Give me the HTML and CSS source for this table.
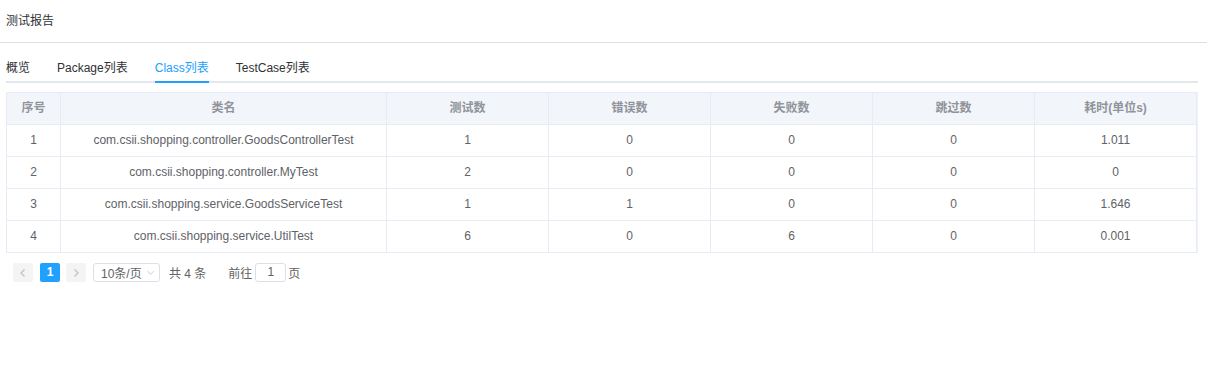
FILE: index.html
```html
<!DOCTYPE html>
<html lang="zh-CN">
<head>
<meta charset="utf-8">
<title>测试报告</title>
<link rel="stylesheet" href="styles.css">
</head>
<body>
<div class="page-header">测试报告</div>
<div class="content">
  <div class="tabs">
    <div class="tab">概览</div>
    <div class="tab">Package列表</div>
    <div class="tab active">Class列表</div>
    <div class="tab">TestCase列表</div>
  </div>
  <div class="grid">
    <div class="cell head">序号</div>
    <div class="cell head">类名</div>
    <div class="cell head">测试数</div>
    <div class="cell head">错误数</div>
    <div class="cell head">失败数</div>
    <div class="cell head">跳过数</div>
    <div class="cell head">耗时(单位s)</div>

    <div class="cell">1</div>
    <div class="cell">com.csii.shopping.controller.GoodsControllerTest</div>
    <div class="cell">1</div>
    <div class="cell">0</div>
    <div class="cell">0</div>
    <div class="cell">0</div>
    <div class="cell">1.011</div>

    <div class="cell">2</div>
    <div class="cell">com.csii.shopping.controller.MyTest</div>
    <div class="cell">2</div>
    <div class="cell">0</div>
    <div class="cell">0</div>
    <div class="cell">0</div>
    <div class="cell">0</div>

    <div class="cell">3</div>
    <div class="cell">com.csii.shopping.service.GoodsServiceTest</div>
    <div class="cell">1</div>
    <div class="cell">1</div>
    <div class="cell">0</div>
    <div class="cell">0</div>
    <div class="cell">1.646</div>

    <div class="cell">4</div>
    <div class="cell">com.csii.shopping.service.UtilTest</div>
    <div class="cell">6</div>
    <div class="cell">0</div>
    <div class="cell">6</div>
    <div class="cell">0</div>
    <div class="cell">0.001</div>
  </div>
  <div class="pagination">
    <button class="pg-btn disabled" aria-label="上一页">
      <svg width="10" height="10" viewBox="0 0 10 10"><path d="M6.5 1.5 L3 5 L6.5 8.5" fill="none" stroke="currentColor" stroke-width="1.4"/></svg>
    </button>
    <span class="pg-num active">1</span>
    <button class="pg-btn disabled" aria-label="下一页">
      <svg width="10" height="10" viewBox="0 0 10 10"><path d="M3.5 1.5 L7 5 L3.5 8.5" fill="none" stroke="currentColor" stroke-width="1.4"/></svg>
    </button>
    <div class="pg-select">
      <span>10条/页</span>
      <svg class="pg-caret" width="9" height="9" viewBox="0 0 10 10"><path d="M1.5 3.5 L5 7 L8.5 3.5" fill="none" stroke="currentColor" stroke-width="1"/></svg>
    </div>
    <span class="pg-total">共 4 条</span>
    <span class="pg-jump">前往<span class="pg-input">1</span>页</span>
  </div>
</div>
</body>
</html>
```
FILE: styles.css
```css
* { box-sizing: border-box; }

body {
  margin: 0;
  background: #ffffff;
  font-family: "Liberation Sans", "Noto Sans CJK SC", sans-serif;
  font-size: 12px;
  color: #303133;
}

.page-header {
  height: 43px;
  line-height: 42px;
  padding-left: 6px;
  border-bottom: 1px solid #dcdfe6;
  color: #303133;
  font-size: 12px;
}

.content {
  padding: 0 9px 0 6px;
}

.tabs {
  display: flex;
  margin-top: 12px;
  border-bottom: 2px solid #e4e7ed;
  height: 28px;
}

.tab {
  height: 28px;
  line-height: 27px;
  margin-right: 27px;
  color: #303133;
  font-size: 12px;
  white-space: nowrap;
}

.tab.active {
  color: #20a0ff;
  border-bottom: 2px solid #20a0ff;
}

.grid {
  display: grid;
  grid-template-columns: 54px 326px 162px 162px 162px 162px 162px;
  width: 1192px;
  margin-top: 9px;
  border-top: 1px solid #e6ebf5;
  border-left: 1px solid #e6ebf5;
  border-right: 1px solid #eef2f8;
}

.cell {
  height: 32px;
  line-height: 31px;
  text-align: center;
  color: #606266;
  border-right: 1px solid #e6ebf5;
  border-bottom: 1px solid #e6ebf5;
  white-space: nowrap;
  overflow: hidden;
}

.cell.head {
  background: #f2f6fb;
  color: #909399;
  font-weight: bold;
}

.pagination {
  display: flex;
  align-items: center;
  margin-top: 10px;
  padding-left: 7px;
  height: 19px;
  color: #606266;
  font-size: 12px;
}

.pg-btn {
  width: 20px;
  height: 19px;
  padding: 0;
  border: 0;
  border-radius: 2px;
  background: #f4f4f5;
  color: #c0c4cc;
  display: flex;
  align-items: center;
  justify-content: center;
}

.pg-num {
  width: 20px;
  height: 19px;
  line-height: 19px;
  margin: 0 6px 0 7px;
  border-radius: 2px;
  text-align: center;
  font-weight: bold;
}

.pg-num.active {
  background: #20a0ff;
  color: #ffffff;
}

.pg-select {
  display: flex;
  align-items: center;
  justify-content: space-between;
  width: 67px;
  height: 19px;
  margin-left: 7px;
  padding: 0 4px 0 7px;
  border: 1px solid #dcdfe6;
  border-radius: 3px;
  color: #606266;
}

.pg-caret {
  color: #c0c4cc;
}

.pg-total {
  margin-left: 9px;
}

.pg-jump {
  display: flex;
  align-items: center;
  margin-left: 22px;
}

.pg-input {
  display: inline-block;
  width: 31px;
  height: 19px;
  line-height: 17px;
  margin: 0 2px 0 3px;
  border: 1px solid #dcdfe6;
  border-radius: 3px;
  text-align: center;
}
```
